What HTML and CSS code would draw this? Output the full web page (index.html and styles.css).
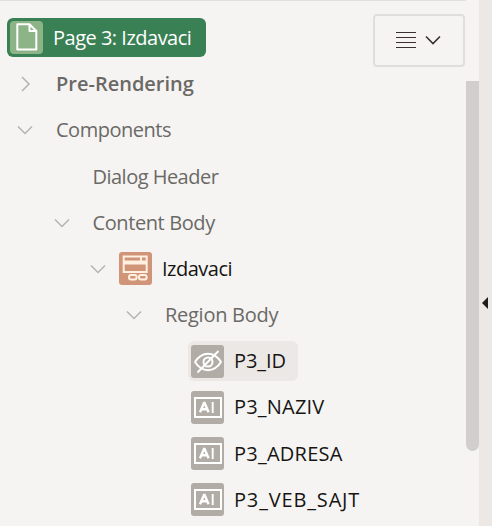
FILE: index.html
```
<!DOCTYPE html>
<html lang="sr-Latn">
<head>
<meta charset="utf-8">
<title>Page 3: Izdavaci</title>
<link rel="stylesheet" href="styles.css">
</head>
<body>
<svg class="defs" aria-hidden="true">
  <symbol id="down" viewBox="0 0 16 16"><path d="M1 4.5l7 7 7-7"/></symbol>
  <symbol id="right" viewBox="0 0 16 16"><path d="M5 1l7 7-7 7"/></symbol>
  <symbol id="field" viewBox="0 0 33 33"><path d="M4 7h26v19H4z"/><path d="M9 21.2l4-9.2h.6l4 9.2M10.6 18.2h5.4" stroke-width="2.4"/><path d="M21.7 11v11" stroke-width="1.9"/></symbol>
</svg>
<div class="app">
  <main class="pane">
    <header class="top">
      <div class="page">
        <svg class="page-icon" viewBox="0 0 33 33"><path d="M7.3 3.2h12.2l6.8 6.8v18.5h-19zM19.5 3.2V10h6.8"/></svg>
        <span class="t-page">Page 3: Izdavaci</span>
      </div>
      <button class="menu" aria-label="Menu">
        <svg class="lines" viewBox="0 0 20 18"><path d="M0 1.5h20M0 6.5h20M0 11.5h20M0 16.5h20"/></svg>
        <svg class="caret"><use href="#down"/></svg>
      </button>
    </header>
    <div class="tree">
      <div class="row l0"><svg class="arrow"><use href="#right"/></svg><span class="label bold">Pre-Rendering</span></div>
      <div class="row l0"><svg class="arrow"><use href="#down"/></svg><span class="label t-comp">Components</span></div>
      <div class="row l1"><span class="arrow"></span><span class="label t-dialog">Dialog Header</span></div>
      <div class="row l1"><svg class="arrow"><use href="#down"/></svg><span class="label t-content">Content Body</span></div>
      <div class="row l2"><svg class="arrow"><use href="#down"/></svg><div class="item region"><svg class="icon" viewBox="0 0 33 33"><path d="M4.7 4.5h23v5h-23zM22 4.5v5M4.700 11.500h23v8.500h-23z"/><rect x="10" y="23" width="7.600" height="4.400" rx="2"/><rect x="20" y="23" width="7.600" height="4.400" rx="2"/></svg><span class="t-izd">Izdavaci</span></div></div>
      <div class="row l3"><svg class="arrow"><use href="#down"/></svg><span class="label t-region">Region Body</span></div>
      <div class="row l4"><div class="item selected"><svg class="icon" viewBox="0 0 33 33"><path d="M4 17C7.500 11.500 12 8.800 17 8.800S26.500 11.500 30 17C26.500 22.500 22 25.200 17 25.200S7.500 22.500 4 17zM6.500 27.500L27.500 6"/><circle cx="17" cy="17" r="4.500"/></svg><span class="t-id">P3_ID</span></div></div>
      <div class="row l4"><div class="item"><svg class="icon"><use href="#field"/></svg><span class="t-naziv">P3_NAZIV</span></div></div>
      <div class="row l4"><div class="item"><svg class="icon"><use href="#field"/></svg><span class="t-adresa">P3_ADRESA</span></div></div>
      <div class="row l4"><div class="item"><svg class="icon"><use href="#field"/></svg><span class="t-sajt">P3_VEB_SAJT</span></div></div>
    </div>
  </main>
  <div class="track"><div class="thumb"></div></div>
  <aside class="splitter"><svg class="collapse" viewBox="0 0 6 12"><path d="M6 0v12L0 6z"/></svg></aside>
</div>
</body>
</html>
```
FILE: styles.css
```
* { box-sizing: border-box; }
body { margin: 0; font: 20px/28px "Open Sans", sans-serif; color: #161513; }
.defs { display: none; }
.app { display: flex; width: 492px; height: 526px; overflow: hidden; background: #f5f4f2; }
.pane { width: 466px; border-top: 1px solid #e0dfdd; }
.top { display: flex; justify-content: space-between; align-items: flex-start; height: 60px; padding: 13px 1px 0 7px; }
svg { flex: none; fill: none; }
span { white-space: nowrap; }
.page { display: flex; align-items: center; gap: 10px; width: 199px; height: 39px; margin-top: 4px; padding-left: 3px; border-radius: 6px; background: #3a8055; color: #fff; }
.page-icon { width: 33px; height: 33px; border-radius: 4px; background: #8cb487; stroke: #fff; stroke-width: 2; stroke-linejoin: round; }
.menu { display: flex; align-items: center; width: 92px; height: 53px; padding: 0 0 0 21px; border: 2px solid #dfdedc; border-radius: 4px; background: transparent; gap: 9px; }
.lines { width: 20px; height: 18px; margin-top: -2px; stroke: #39302e; stroke-width: 1.2; }
.caret { width: 16px; height: 16px; margin-top: -1px; stroke: #39302e; stroke-width: 1.6; }
.row { display: flex; align-items: center; height: 46.2px; }
.l0 { padding-left: 17px; }
.l1 { padding-left: 53.5px; }
.l2 { padding-left: 90px; }
.l3 { padding-left: 126px; }
.l4 { padding-left: 188px; }
.arrow { flex: none; width: 16px; height: 16px; stroke: #b5b3b0; stroke-width: 1.5; }
.label { margin-left: 23px; color: #6b6966; }
.bold { font-weight: 600; }
.t-page { letter-spacing: -0.5px; }
.t-comp { letter-spacing: -0.48px; }
.t-dialog { padding-top: 2px; letter-spacing: -0.52px; }
.t-content { letter-spacing: -0.4px; }
.t-izd { letter-spacing: -0.5px; }
.t-region { letter-spacing: -0.27px; }
.t-id { letter-spacing: -0.1px; }
.t-naziv { letter-spacing: 0.2px; }
.t-adresa { letter-spacing: 0.24px; }
.t-sajt { letter-spacing: 0.84px; }
.item { display: flex; align-items: center; gap: 10px; height: 40px; padding: 0 13px 0 3px; border-radius: 6px; }
.region { margin-left: 10px; }
.selected { width: 110px; background: #ece8e5; }
.icon { width: 33px; height: 33px; border-radius: 3px; background: #b2aca6; stroke: #fff; stroke-width: 2; }
.region .icon { background: #d09478; stroke: #fff0df; }
.track { width: 13px; padding-top: 81px; }
.thumb { height: 370px; border-radius: 0 0 7px 7px; background: #d0cfce; }
.splitter { display: flex; align-items: center; justify-content: flex-end; width: 13px; padding: 80px 4px 0 0; background: #ebe8e5; }
.collapse { width: 6px; height: 12px; fill: #201e1c; }
```
